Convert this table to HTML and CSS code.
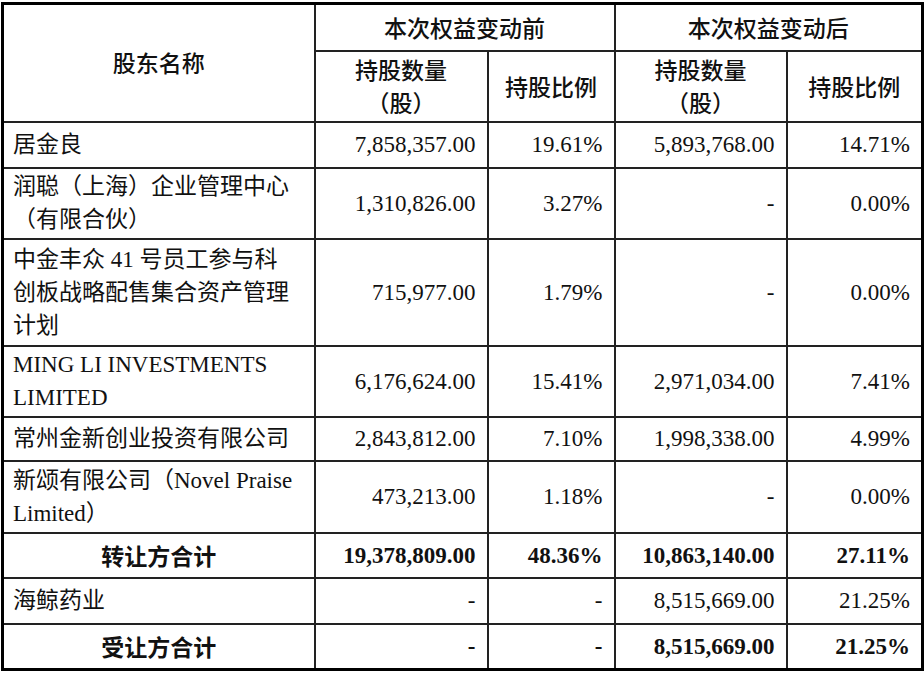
FILE: index.html
```html
<!DOCTYPE html>
<html lang="zh">
<head>
<meta charset="utf-8">
<link rel="stylesheet" href="styles.css">
</head>
<body>
<table class="tbl">
  <colgroup>
    <col class="c1"><col class="c2"><col class="c3"><col class="c4"><col class="c5">
  </colgroup>
  <thead>
    <tr class="h1">
      <th rowspan="2" class="hd">股东名称</th>
      <th colspan="2" class="hd">本次权益变动前</th>
      <th colspan="2" class="hd">本次权益变动后</th>
    </tr>
    <tr class="h2">
      <th class="hd">持股数量<br>（股）</th>
      <th class="hd">持股比例</th>
      <th class="hd">持股数量<br>（股）</th>
      <th class="hd">持股比例</th>
    </tr>
  </thead>
  <tbody>
    <tr class="r46">
      <td class="name">居金良</td>
      <td class="num">7,858,357.00</td>
      <td class="num">19.61%</td>
      <td class="num">5,893,768.00</td>
      <td class="num">14.71%</td>
    </tr>
    <tr class="r71">
      <td class="name">润聪（上海）企业管理中心<br>（有限合伙）</td>
      <td class="num">1,310,826.00</td>
      <td class="num">3.27%</td>
      <td class="num">-</td>
      <td class="num">0.00%</td>
    </tr>
    <tr class="r107">
      <td class="name">中金丰众 41 号员工参与科<br>创板战略配售集合资产管理<br>计划</td>
      <td class="num">715,977.00</td>
      <td class="num">1.79%</td>
      <td class="num">-</td>
      <td class="num">0.00%</td>
    </tr>
    <tr class="r71">
      <td class="name">MING LI INVESTMENTS<br>LIMITED</td>
      <td class="num">6,176,624.00</td>
      <td class="num">15.41%</td>
      <td class="num">2,971,034.00</td>
      <td class="num">7.41%</td>
    </tr>
    <tr class="r44">
      <td class="name">常州金新创业投资有限公司</td>
      <td class="num">2,843,812.00</td>
      <td class="num">7.10%</td>
      <td class="num">1,998,338.00</td>
      <td class="num">4.99%</td>
    </tr>
    <tr class="r72">
      <td class="name">新颂有限公司（Novel Praise<br>Limited）</td>
      <td class="num">473,213.00</td>
      <td class="num">1.18%</td>
      <td class="num">-</td>
      <td class="num">0.00%</td>
    </tr>
    <tr class="r45 total">
      <td class="tname">转让方合计</td>
      <td class="num">19,378,809.00</td>
      <td class="num">48.36%</td>
      <td class="num">10,863,140.00</td>
      <td class="num">27.11%</td>
    </tr>
    <tr class="r46">
      <td class="name">海鲸药业</td>
      <td class="num">-</td>
      <td class="num">-</td>
      <td class="num">8,515,669.00</td>
      <td class="num">21.25%</td>
    </tr>
    <tr class="r47 total">
      <td class="tname">受让方合计</td>
      <td class="num">-</td>
      <td class="num">-</td>
      <td class="num">8,515,669.00</td>
      <td class="num">21.25%</td>
    </tr>
  </tbody>
</table>
</body>
</html>
```
FILE: styles.css
```css
html, body {
  margin: 0;
  padding: 0;
  background: #ffffff;
}
body {
  padding: 2px 0 0 1px;
}
.tbl {
  border-collapse: collapse;
  table-layout: fixed;
  width: 920px;
  border: 3px solid #000;
  font-family: "Liberation Serif", "Noto Sans CJK SC", serif;
  font-size: 23px;
  color: #111;
}
.c1 { width: 312px; }
.c2 { width: 173px; }
.c3 { width: 127px; }
.c4 { width: 172px; }
.c5 { width: 136px; }
.tbl th, .tbl td {
  border: 2px solid #222;
  padding: 0 11px;
  line-height: 33px;
  vertical-align: middle;
  white-space: nowrap;
}
.hd {
  font-family: "Noto Sans CJK SC", sans-serif;
  font-weight: 500;
  font-size: 23px;
  line-height: 34px;
  text-align: center;
  color: #111;
}
.h1 { height: 47px; }
.h2 { height: 71px; }
.name {
  text-align: left;
}
.tbl td.name {
  padding-left: 9px;
}
.tname {
  text-align: center;
  font-family: "Noto Sans CJK SC", sans-serif;
  font-weight: 700;
  font-size: 23px;
}
.num {
  text-align: right;
}
.total .num {
  font-weight: 700;
}
.r44 { height: 44px; }
.r45 { height: 45px; }
.r46 { height: 46px; }
.r47 { height: 46px; }
.r71 { height: 71px; }
.r72 { height: 72px; }
.r107 { height: 107px; }
```
